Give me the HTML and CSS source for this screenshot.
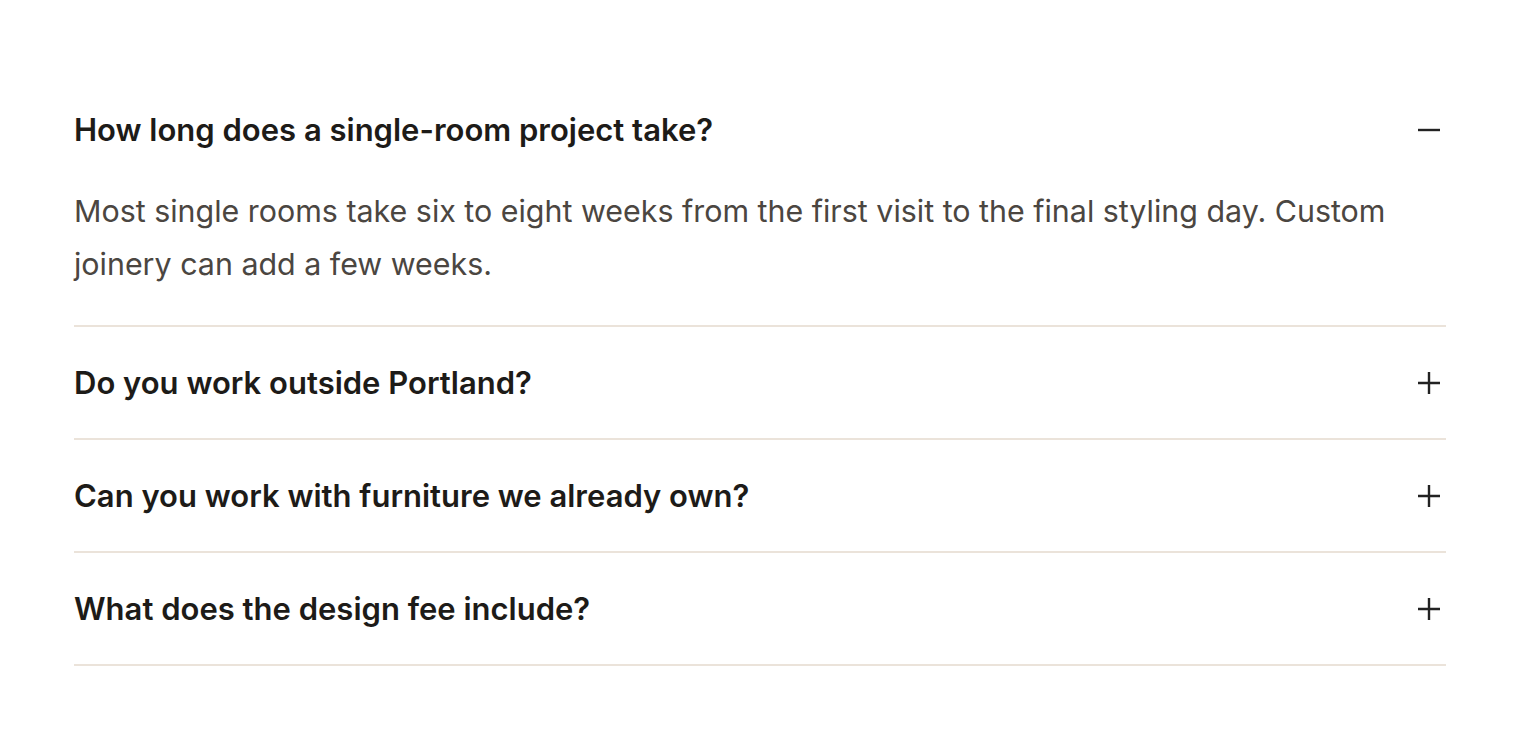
FILE: index.html
```html
<!DOCTYPE html>
<html lang="en">

<head>
    <meta charset="UTF-8" />
    <meta name="viewport" content="width=device-width, initial-scale=1.0" />
    <title>FAQ</title>
    <link rel="stylesheet" href="styles.css">
</head>

<body>
    <section class="faq">
        <div class="faq-item open">
            <button class="faq-question">
                <span>How long does a single-room project take?</span>
                <svg class="faq-icon" viewBox="0 0 22 22"><path d="M0 11h22" /></svg>
            </button>
            <p class="faq-answer">Most single rooms take six to eight weeks from the first visit to the final styling day. Custom joinery can add a few weeks.</p>
        </div>

        <div class="faq-item">
            <button class="faq-question">
                <span>Do you work outside Portland?</span>
                <svg class="faq-icon" viewBox="0 0 22 22"><path d="M0 11h22M11 0v22" /></svg>
            </button>
        </div>

        <div class="faq-item">
            <button class="faq-question">
                <span>Can you work with furniture we already own?</span>
                <svg class="faq-icon" viewBox="0 0 22 22"><path d="M0 11h22M11 0v22" /></svg>
            </button>
        </div>

        <div class="faq-item">
            <button class="faq-question">
                <span>What does the design fee include?</span>
                <svg class="faq-icon" viewBox="0 0 22 22"><path d="M0 11h22M11 0v22" /></svg>
            </button>
        </div>
    </section>
</body>

</html>
```

FILE: styles.css
```css
body {
    margin: 0;
    padding: 0;
    background: #fff;
    font-family: 'Inter', 'Open Sans', sans-serif;
    color: #1d1b18;
}

.faq {
    padding: 74px 74px 0;
}

.faq-item {
    border-bottom: 2px solid #ebe3da;
}

.faq-question {
    width: 100%;
    display: flex;
    align-items: center;
    justify-content: space-between;
    padding: 36px 0;
    border: none;
    background: none;
    font-family: inherit;
    font-size: 31px;
    font-weight: 600;
    line-height: 39px;
    color: #1d1b18;
    text-align: left;
    cursor: pointer;
}

.faq-icon {
    width: 22px;
    height: 22px;
    margin-right: 6px;
    fill: none;
    stroke: #222;
    stroke-width: 2.4;
}

.faq-answer {
    margin: 0;
    padding-bottom: 34px;
    font-size: 30.4px;
    line-height: 53px;
    color: #4b4641;
}
```
